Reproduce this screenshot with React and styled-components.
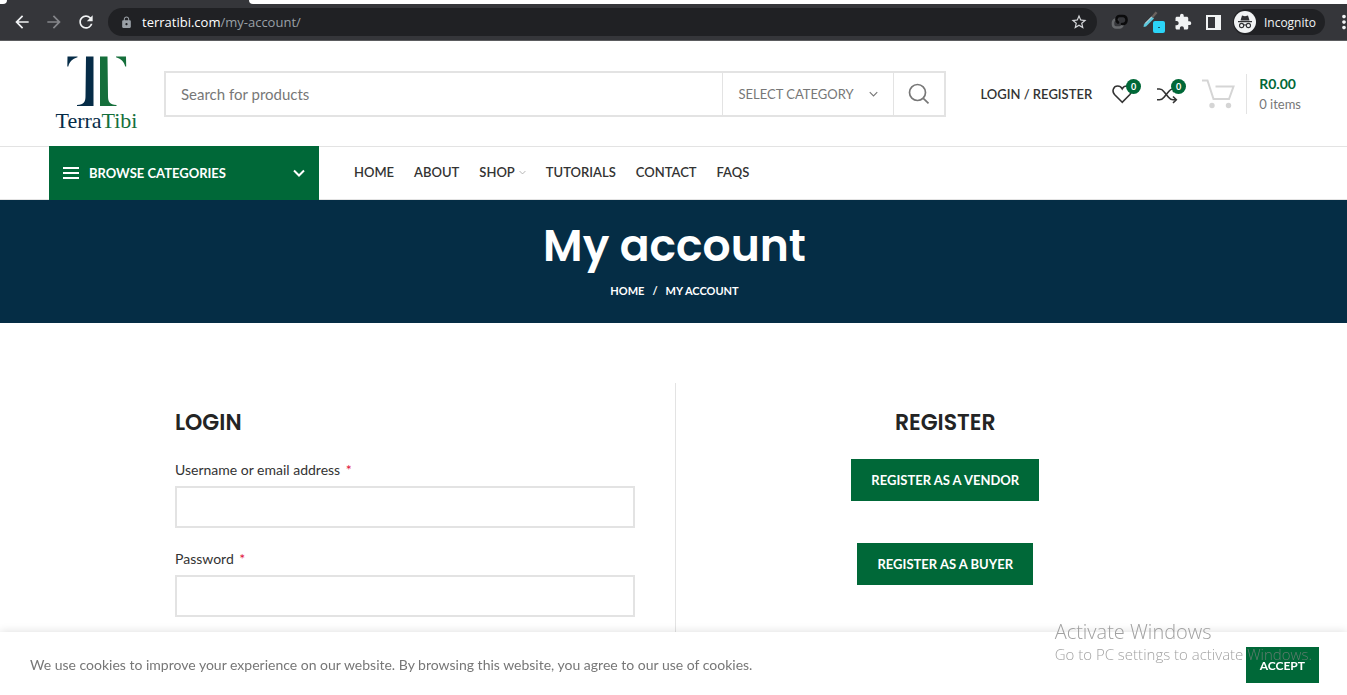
import styled, { createGlobalStyle } from "styled-components";
import { useState } from "react";
import { MdArrowBack, MdArrowForward, MdRefresh, MdLock, MdStarBorder, MdExtension, MdMoreVert } from "react-icons/md";

const categories = ["Select category", "Craft", "Home", "Garden"];
const links = ["Home", "About", "Shop", "Tutorials", "Contact", "FAQs"];

const Chevron = ({ width, height, stroke }) => (
  <svg width={width} height={height} viewBox="0 0 12 7" fill="none" stroke="currentColor" strokeWidth={stroke}>
    <path d="M1 1l5 5 5-5" />
  </svg>
);

const Browser = () => (
  <>
    <TabStrip>
      <TabLeft />
      <ActiveTab />
      <TabRight />
    </TabStrip>
    <Toolbar>
      <ToolButton aria-label="Back"><MdArrowBack size={20} /></ToolButton>
      <ToolButton aria-label="Forward" $muted><MdArrowForward size={20} /></ToolButton>
      <ToolButton aria-label="Reload"><MdRefresh size={20} /></ToolButton>
      <Address>
        <MdLock size={13} color="#9aa0a6" />
        <Url>terratibi.com<span>/my-account/</span></Url>
        <MdStarBorder size={18} color="#d5d7da" />
      </Address>
      <Extensions>
        <svg width="18" height="18" viewBox="0 0 18 18" fill="none" strokeWidth="2.600" strokeLinecap="round">
          <path d="M6 6.500H5a3 3 0 0 0-3 3v2a3 3 0 0 0 3 3h3.500a3 3 0 0 0 3-3" stroke="#66686b" />
          <path d="M7 9.500a3 3 0 0 1-1.500-2.500V6a3 3 0 0 1 3-3H12a3.500 3.500 0 0 1 3.500 3.500v1A3.500 3.500 0 0 1 12 11h-1" stroke="#0b0b0c" />
        </svg>
        <svg width="22" height="22" viewBox="0 0 22 22">
          <path d="M1 13.500l8-8 2 2-8 8-2.500.5z" fill="#5cc8dd" />
          <path d="M2 12.500l7-7" stroke="#e6eef0" strokeWidth="1" />
          <path d="M8.500 5.500l4-5 2 1.500-4.500 5z" fill="#6b625e" />
          <rect x="10" y="10" width="12" height="12" rx="2" fill="#2bd4f7" />
          <path d="M15 16.500h2" stroke="#155666" />
        </svg>
        <MdExtension size={18} />
        <svg width="15" height="15" viewBox="0 0 15 15">
          <path fillRule="evenodd" fill="#f1f3f4" d="M0 0h15v15H0zM2 2v11h7V2z" />
        </svg>
      </Extensions>
      <Incognito>
        <svg width="22" height="22" viewBox="0 0 22 22">
          <circle cx="11" cy="11" r="11" fill="#f1f3f4" />
          <path d="M8 4.500l3 .8 3-.8 1.500 5h-9zM4 10h14v1.200H4z" fill="#303134" />
          <g fill="none" stroke="#303134" strokeWidth="1.100">
            <circle cx="7.600" cy="14.500" r="2.100" />
            <circle cx="14.400" cy="14.500" r="2.100" />
            <path d="M9.700 14.200q1.300-.8 2.600 0" />
          </g>
        </svg>
        Incognito
      </Incognito>
      <MenuButton aria-label="Menu"><MdMoreVert size={22} /></MenuButton>
    </Toolbar>
  </>
);

const Logo = () => (
  <LogoLink href="#home">
    <svg width="60" height="51" viewBox="0 0 60 51" aria-hidden="true">
      <g fill="#062c47">
        <path d="M19 .5h7.500V50H10v-1c7-.5 8.500-3 8.500-9z" />
        <path d="M.5.500h10v.8C5 3 2.500 6 1.300 10.500H.3z" />
      </g>
      <g fill="#156f3b" transform="translate(59.500 0) scale(-1 1)">
        <path d="M19 .5h7.500V50H10v-1c7-.5 8.500-3 8.500-9z" />
        <path d="M.5.500h10v.8C5 3 2.500 6 1.300 10.500H.3z" />
      </g>
    </svg>
    <LogoText>Terra<span>Tibi</span></LogoText>
  </LogoLink>
);

const App = () => {
  const [search, setSearch] = useState("");
  const [username, setUsername] = useState("");
  const [password, setPassword] = useState("");

  return (
    <Page>
      <GlobalStyle />
      <Browser />
      <Header>
        <Logo />
        <SearchForm onSubmit={(e) => e.preventDefault()}>
          <SearchInput
            aria-label="Search"
            placeholder="Search for products"
            value={search}
            onChange={(e) => setSearch(e.target.value)}
          />
          <CategoryBox>
            <Category aria-label="Category">
              {categories.map((c) => <option key={c}>{c}</option>)}
            </Category>
            <Chevron width={9} height={6} stroke={1.5} />
          </CategoryBox>
          <SearchButton aria-label="Search products">
            <svg width="22" height="22" viewBox="0 0 22 22" fill="none" stroke="currentColor" strokeWidth="1.700">
              <circle cx="9.500" cy="9.500" r="8" />
              <path d="M15.300 15.300l5.200 5" />
            </svg>
          </SearchButton>
        </SearchForm>
        <Tools>
          <LoginLink href="#login">Login / Register</LoginLink>
          <IconLink href="#wishlist" aria-label="Wishlist">
            <svg width="21" height="20" viewBox="0 0 21 20" fill="none" stroke="#333" strokeWidth="1.600">
              <path d="M10.200 18.300L2.500 10.500C-.5 7 1.500 2 5.700 2c2 0 3.500 1 4.500 2.800C11.200 3 12.700 2 14.700 2c4.200 0 6.200 5 3.200 8.500z" />
            </svg>
            <Badge>0</Badge>
          </IconLink>
          <IconLink href="#compare" aria-label="Compare">
            <svg width="21" height="20" viewBox="0 0 21 20" fill="none" stroke="#333" strokeWidth="1.600">
              <path d="M0 5h2.500c2 0 3.200 1 4.500 2.700l4.500 5.500c1.300 1.600 2.500 2.600 4.500 2.600h3" />
              <path d="M0 15.800h2.500c2 0 3.200-1 4.500-2.600l4.500-5.500C12.800 6 14 5 16 5h3" />
              <path d="M16 12.500l3.300 3.300L16 19M16 2l3.300 3L16 8" />
            </svg>
            <Badge>0</Badge>
          </IconLink>
          <Cart href="#cart">
            <svg width="33" height="30" viewBox="0 0 33 30" fill="none" stroke="#d5d5d5" strokeWidth="2">
              <path d="M0 1.500h5.500l6 18.500h15.500L31.500 7.500H13.500" />
              <circle cx="10" cy="26.500" r="2.700" fill="#d5d5d5" stroke="none" />
              <circle cx="26.500" cy="26.500" r="2.700" fill="#d5d5d5" stroke="none" />
            </svg>
            <CartText><b>R0.00</b>0 items</CartText>
          </Cart>
        </Tools>
      </Header>
      <NavRow>
        <Browse>
          <svg width="16" height="14" viewBox="0 0 16 14" stroke="#fff" strokeWidth="2">
            <path d="M0 2h16M0 7h16M0 12h16" />
          </svg>
          <span>Browse Categories</span>
          <Chevron width={12} height={8} stroke={2} />
        </Browse>
        <Nav>
          {links.map((l) => (
            <a key={l} href={`#${l.toLowerCase()}`}>
              {l}
              {l === "Shop" && <Chevron width={7} height={5} stroke={1.5} />}
            </a>
          ))}
        </Nav>
      </NavRow>
      <Title>
        <h1>My account</h1>
        <Crumbs>
          <a href="#home">Home</a>
          <span>/</span>
          <span>My account</span>
        </Crumbs>
      </Title>
      <Content>
        <Account>
          <Login onSubmit={(e) => e.preventDefault()}>
            <Heading>Login</Heading>
            <Label htmlFor="username">Username or email address <i>*</i></Label>
            <Input id="username" value={username} onChange={(e) => setUsername(e.target.value)} />
            <Label htmlFor="password">Password <i>*</i></Label>
            <Input id="password" type="password" value={password} onChange={(e) => setPassword(e.target.value)} />
          </Login>
          <Register>
            <Heading>Register</Heading>
            <Button>Register as a vendor</Button>
            <Button>Register as a buyer</Button>
          </Register>
        </Account>
      </Content>
      <Cookies>
        <p>We use cookies to improve your experience on our website. By browsing this website, you agree to our use of cookies.</p>
        <Button $small>Accept</Button>
      </Cookies>
      <Watermark>
        <strong>Activate Windows</strong>
        <span>Go to PC settings to activate Windows.</span>
      </Watermark>
    </Page>
  );
};

export default App;

const GlobalStyle = createGlobalStyle`
  * {
    box-sizing: border-box;
  }
  body {
    margin: 0;
    background: #fff;
    color: #777;
    font-family: Lato, "Liberation Sans", sans-serif;
    font-size: 14px;
  }
  h1, h2, p {
    margin: 0;
  }
  a {
    color: inherit;
    text-decoration: none;
  }
  button, input, select {
    font-family: inherit;
    border: none;
    border-radius: 0;
    background: none;
    padding: 0;
  }
  button {
    cursor: pointer;
  }
  svg {
    display: block;
    flex-shrink: 0;
  }
`;

const Page = styled.div`
  display: flex;
  flex-direction: column;
  height: 100vh;
  overflow: hidden;
`;

const TabStrip = styled.div`
  display: flex;
  flex-shrink: 0;
  height: 4px;
  background: #35363a;
`;

const TabLeft = styled.div`
  width: 7px;
  background: #fff;
  border-bottom-right-radius: 6px;
`;

const ActiveTab = styled.div`
  width: 242px;
`;

const TabRight = styled.div`
  flex: 1;
  background: #fff;
  border-bottom-left-radius: 6px;
`;

const Toolbar = styled.div`
  display: flex;
  align-items: center;
  flex-shrink: 0;
  gap: 12px;
  height: 37px;
  padding-left: 12px;
  background: #35363a;
  border-bottom: 1px solid #5b5c5f;
  color: #f1f3f4;
  overflow: hidden;
  font-family: "Open Sans", "Noto Sans", sans-serif;
`;

const ToolButton = styled.button`
  flex-shrink: 0;
  color: ${(props) => (props.$muted ? "#85868a" : "#f1f3f4")};
`;

/* runs past the window's right edge */
const MenuButton = styled(ToolButton)`
  margin: 0 -8px 0 -4px;
`;

const Address = styled.div`
  display: flex;
  align-items: center;
  flex: 1;
  height: 28px;
  padding: 0 9px 0 12px;
  border-radius: 14px;
  background: #202124;
`;

const Url = styled.div`
  flex: 1;
  margin-left: 9px;
  font-size: 13px;
  color: #fff;
  span {
    color: #9aa0a6;
  }
`;

const Extensions = styled.div`
  display: flex;
  align-items: center;
  gap: 14px;
  margin-left: 2px;
  svg + svg + svg {
    margin-left: -5px;
  }
  svg + svg + svg + svg {
    margin-left: 0;
  }
`;

const Incognito = styled.div`
  display: flex;
  align-items: center;
  gap: 8px;
  height: 26px;
  padding: 0 9px 0 1px;
  border-radius: 13px;
  background: #202124;
  font-size: 12px;
`;

const Header = styled.header`
  display: flex;
  align-items: center;
  flex-shrink: 0;
  height: 105px;
  padding: 0 46px 0 54px;
`;

const LogoLink = styled.a`
  display: flex;
  flex-direction: column;
  align-items: center;
  width: 85px;
  margin-right: 25px;
  padding-top: 4px;
`;

const LogoText = styled.span`
  font-family: "Liberation Serif", serif;
  font-size: 22px;
  line-height: 28px;
  color: #062c47;
  span {
    color: #156f3b;
  }
`;

const SearchForm = styled.form`
  display: flex;
  flex: 1;
  height: 46px;
  border: 2px solid #e3e3e3;
`;

const SearchInput = styled.input`
  flex: 1;
  min-width: 0;
  padding: 0 15px;
  font-size: 15px;
  color: #777;
  outline: none;
  &::placeholder {
    color: #777;
  }
`;

const CategoryBox = styled.div`
  display: flex;
  align-items: center;
  width: 172px;
  padding: 0 15px;
  border: solid #e3e3e3;
  border-width: 0 1px;
`;

const Category = styled.select`
  flex: 1;
  min-width: 0;
  appearance: none;
  font-size: 13px;
  text-transform: uppercase;
  color: #777;
`;

const SearchButton = styled.button`
  display: grid;
  place-items: center;
  width: 50px;
  color: #777;
`;

const Tools = styled.div`
  display: flex;
  align-items: center;
  gap: 20px;
  margin-left: 34px;
`;

const LoginLink = styled.a`
  font-size: 13px;
  font-weight: 600;
  text-transform: uppercase;
  color: #333;
`;

const IconLink = styled.a`
  position: relative;
  width: 25px;
`;

const Badge = styled.span`
  position: absolute;
  top: -5px;
  right: -4px;
  width: 15px;
  height: 15px;
  border-radius: 50%;
  background: #006838;
  color: #fff;
  font-size: 9px;
  font-weight: 700;
  line-height: 15px;
  text-align: center;
`;

const Cart = styled.a`
  display: flex;
  align-items: center;
  gap: 11px;
`;

const CartText = styled.span`
  padding-left: 12px;
  border-left: 1px solid #e3e3e3;
  font-size: 13px;
  line-height: 20px;
  b {
    display: block;
    font-size: 14px;
    color: #006838;
  }
`;

const NavRow = styled.div`
  display: flex;
  align-items: center;
  flex-shrink: 0;
  height: 54px;
  padding: 0 49px;
  border: solid #e3e3e3;
  border-width: 1px 0;
`;

const Browse = styled.button`
  display: flex;
  align-items: center;
  gap: 10px;
  width: 270px;
  height: 54px;
  margin: -1px 35px -1px 0;
  padding: 0 14px;
  background: #006838;
  color: #fff;
  font-size: 13px;
  font-weight: 700;
  text-transform: uppercase;
  span {
    flex: 1;
    text-align: left;
  }
`;

const Nav = styled.nav`
  display: flex;
  gap: 20px;
  padding-bottom: 2px;
  font-size: 13px;
  font-weight: 600;
  text-transform: uppercase;
  color: #333;
  a {
    display: flex;
    align-items: center;
    gap: 4px;
  }
  svg {
    color: #aaa;
  }
`;

const Title = styled.section`
  flex-shrink: 0;
  padding: 16px 0 22px 2px;
  background: #052d45;
  color: #fff;
  text-align: center;
  h1 {
    margin-bottom: 5px;
    font-family: Poppins, Inter, sans-serif;
    font-size: 44px;
    font-weight: 600;
    line-height: 60px;
  }
`;

const Crumbs = styled.nav`
  display: flex;
  justify-content: center;
  gap: 8px;
  font-size: 11px;
  font-weight: 700;
  line-height: 20px;
  text-transform: uppercase;
`;

const Content = styled.main`
  display: flex;
  flex: 1;
  padding: 60px 0 0 3px;
`;

const Account = styled.div`
  display: flex;
  width: 100%;
  max-width: 1080px;
  margin: 0 auto;
`;

const Login = styled.form`
  flex: 1;
  padding: 26px 40px;
  border-right: 1px solid #e3e3e3;
`;

const Register = styled.section`
  display: flex;
  flex: 1;
  flex-direction: column;
  align-items: center;
  padding: 26px 40px;
  button + button {
    margin-top: 42px;
  }
`;

const Heading = styled.h2`
  margin-bottom: 22px;
  font-family: Poppins, Inter, sans-serif;
  font-size: 22px;
  font-weight: 600;
  line-height: 28px;
  text-transform: uppercase;
  color: #242424;
`;

const Label = styled.label`
  display: block;
  margin-bottom: 6px;
  line-height: 21px;
  color: #333;
  i {
    margin-left: 2px;
    font-style: normal;
    color: #e0103a;
  }
`;

const Input = styled.input`
  display: block;
  width: 100%;
  height: 42px;
  margin-bottom: 20px;
  padding: 0 15px;
  border: 2px solid #e3e3e3;
`;

const Button = styled.button`
  flex-shrink: 0;
  height: ${(props) => (props.$small ? "36px" : "42px")};
  padding: 0 ${(props) => (props.$small ? "14px" : "20px")};
  background: #006838;
  color: #fff;
  font-size: ${(props) => (props.$small ? "12px" : "13px")};
  font-weight: 700;
  text-transform: uppercase;
`;

const Cookies = styled.div`
  position: fixed;
  right: 0;
  bottom: 0;
  left: 0;
  display: flex;
  align-items: center;
  justify-content: space-between;
  padding: 15px 28px 12px 30px;
  background: #fff;
  box-shadow: 0 0 9px rgba(0, 0, 0, 0.14);
  p {
    padding-bottom: 2px;
  }
`;

const Watermark = styled.div`
  position: fixed;
  right: 35px;
  bottom: 30px;
  display: flex;
  flex-direction: column;
  color: rgba(130, 130, 130, 0.75);
  font-family: "Open Sans", "Noto Sans", sans-serif;
  font-size: 15px;
  font-weight: 300;
  line-height: 22px;
  pointer-events: none;
  strong {
    font-size: 20px;
    font-weight: 300;
  }
`;
